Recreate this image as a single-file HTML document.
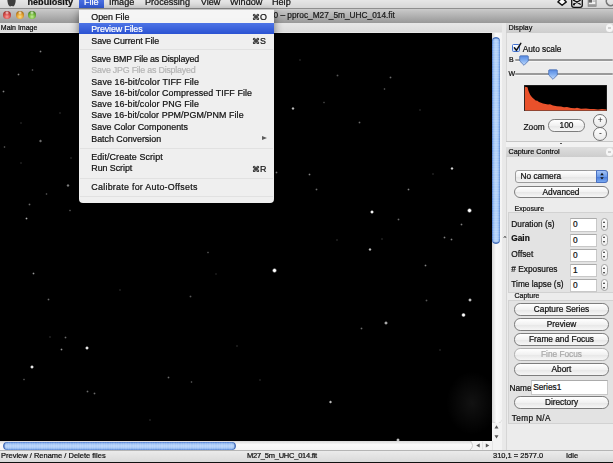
<!DOCTYPE html>
<html>
<head>
<meta charset="utf-8">
<style>
html,body{margin:0;padding:0;}
body{width:613px;height:463px;overflow:hidden;position:relative;background:#e8e8e8;font-family:"Liberation Sans",sans-serif;color:#111;}
.abs{position:absolute;}
.t{position:absolute;white-space:nowrap;line-height:1;}
.t,.btn,.inp,.nc{will-change:opacity;-webkit-text-stroke:0.22px currentColor;}
/* menubar */
#menubar{left:0;top:0;width:613px;height:9px;background:linear-gradient(#e6e6e6,#d6d6d6);overflow:hidden;border-bottom:1px solid #8e8e8e;box-sizing:border-box;}
#menubar .t{font-size:9.1px;top:-1.8px;color:#111;}
#filehl{left:79px;top:0;width:25px;height:9px;background:linear-gradient(#4a6fe0,#2f55d0);}
/* title bar */
#titlebar{left:0;top:9px;width:613px;height:14px;background:linear-gradient(#cbcbcb,#c0c0c0 20%,#989898);box-sizing:border-box;}
.tl{position:absolute;width:8.2px;height:8.2px;border-radius:50%;top:11.1px;}
#hdr{left:0;top:23px;width:502px;height:10px;background:linear-gradient(#e7e7e7,#dcdcdc 85%,#ececec);}
#img{left:0;top:33px;width:492px;height:408px;background:#000;overflow:hidden;}
.s{position:absolute;border-radius:50%;}
/* scrollbars */
#vs{left:492px;top:33px;width:10px;height:408px;background:linear-gradient(90deg,#d8d8d8,#fafafa 40%,#f4f4f4);}
#vthumb{left:492.3px;top:36.8px;width:8px;height:206.8px;border-radius:4px;background:repeating-linear-gradient(0deg,rgba(255,255,255,0.10) 0,rgba(255,255,255,0.10) 1.2px,rgba(255,255,255,0) 1.2px,rgba(255,255,255,0) 2.4px),linear-gradient(90deg,#5886d8,#8ab4ee 14%,#b4d2f9 38%,#b4d2f9 64%,#8ab4ee 88%,#6a98e0);box-shadow:inset 0 1.5px 1px #3d67b4,inset 0 -1.5px 1px #3d67b4;}
#hs{left:0;top:441px;width:502px;height:9px;background:linear-gradient(#d8d8d8,#fafafa 40%,#f4f4f4);}
#hthumb{left:2.5px;top:441.8px;width:233px;height:7.8px;border-radius:4px;background:repeating-linear-gradient(90deg,rgba(255,255,255,0.10) 0,rgba(255,255,255,0.10) 1.2px,rgba(255,255,255,0) 1.2px,rgba(255,255,255,0) 2.4px),linear-gradient(#5886d8,#8ab4ee 14%,#b4d2f9 38%,#b4d2f9 64%,#8ab4ee 88%,#6a98e0);box-shadow:inset 1.5px 0 1px #3d67b4,inset -1.5px 0 1px #3d67b4;}
#status{left:0;top:449.5px;width:613px;height:13.5px;background:linear-gradient(#ebebeb,#dadada);border-top:1px solid #b5b5b5;border-bottom:1.5px solid #111;box-sizing:border-box;}
#status .t{font-size:7.5px;top:1.3px;color:#111;}
/* right panel */
#rp{left:502px;top:23px;width:111px;height:427px;background:#e9e9e9;}
#rpi{left:506px;top:23px;width:107px;height:427px;background:#ececec;border-left:1px solid #d6d6d6;box-sizing:border-box;}
.ph{position:absolute;left:506px;width:107px;height:10px;background:linear-gradient(#dedede,#cdcdcd);}
.ph .t{left:2.5px;top:1.4px;font-size:7.25px;color:#111;}
.lbl{font-size:8.3px;color:#111;}
.sm{font-size:7px;color:#111;}
.btn{position:absolute;height:12.4px;border-radius:6.2px;background:linear-gradient(#ffffff,#f1f1f1 50%,#e6e6e6 51%,#f6f6f6);border:1px solid #7d7d7d;box-sizing:border-box;text-align:center;font-size:8.3px;line-height:10px;color:#111;}
.inp{position:absolute;background:#fff;border:1px solid #c8c8c8;border-top-color:#ababab;box-sizing:border-box;font-size:8.3px;line-height:11px;padding-left:2px;color:#111;}
.step{position:absolute;width:7px;height:12.6px;border-radius:3.5px;border:1px solid #a6a6a6;background:linear-gradient(#fff,#efefef);box-sizing:border-box;}
.step:before{content:"";position:absolute;left:1px;top:1.8px;border-left:1.5px solid transparent;border-right:1.5px solid transparent;border-bottom:2.5px solid #222;}
.step:after{content:"";position:absolute;left:1px;bottom:1.8px;border-left:1.5px solid transparent;border-right:1.5px solid transparent;border-top:2.5px solid #222;}
.grp{position:absolute;background:#e3e3e3;border:1px solid #d2d2d2;border-right:none;box-sizing:border-box;}
/* menu */
#menu{left:79px;top:9px;width:195px;height:193.6px;background:rgba(247,247,247,0.97);border-radius:0 0 4px 4px;box-shadow:0 3px 8px rgba(0,0,0,0.5);}
#menu .t{font-size:8.9px;left:12.3px;color:#111;}
#menu .k{left:173.1px;}
#menu .sep{position:absolute;left:1px;right:1px;height:1px;background:#e1e1e1;}
#mhl{left:0;top:13.6px;width:195px;height:11.4px;background:linear-gradient(#4d74e6,#2a52d2);}
</style>
</head>
<body>
<!-- menubar -->
<div id="menubar" class="abs">
  <div id="filehl" class="abs"></div>
  <svg class="abs" style="left:550px;top:0;" width="63" height="9" viewBox="0 0 63 9">
    <path d="M12.1 -2.2 L16.3 1.9 L12.1 5.3 L7.9 1.9 Z" fill="#fff" stroke="#111" stroke-width="1.4" stroke-linejoin="round"/>
    <rect x="21.7" y="-4" width="10.6" height="11.3" rx="2.2" fill="#dcdcdc" stroke="#111" stroke-width="1.3"/>
    <path d="M23.5 0.2 L30.3 4.2 M23.5 4.2 L30.3 0.2" stroke="#111" stroke-width="1.3" stroke-linecap="round"/>
    <circle cx="24" cy="4.6" r="1" fill="#111"/><circle cx="24" cy="-0.2" r="1" fill="#111"/>
    <rect x="38.2" y="-3" width="7.8" height="9.2" fill="#f2f2f2" stroke="#777" stroke-width="0.9"/>
    <rect x="38.6" y="-1" width="3.4" height="3.6" fill="#666"/>
    <rect x="38.6" y="4.3" width="7" height="1.5" fill="#8a8a8a"/>
    <rect x="42.5" y="0.6" width="3.2" height="0.9" fill="#999"/>
    <path d="M57.3 -1.5 A4.4 4.4 0 0 0 64 4.2" fill="none" stroke="#777" stroke-width="1.6"/>
  </svg>
  <svg class="abs" style="left:5px;top:0;" width="14" height="9" viewBox="0 0 14 9"><path d="M2.4 -1 C2.2 2.5 3.6 6.4 5.2 6.4 C5.9 6.4 6.1 6 6.6 6 C7.1 6 7.3 6.4 8 6.4 C9.6 6.4 11 2.5 10.6 -1 Z" fill="#3e3e3e"/></svg>
  <div class="t" style="left:27.5px;font-weight:bold;">nebulosity</div>
  <div class="t" style="left:84px;color:#fff;">File</div>
  <div class="t" style="left:109px;">Image</div>
  <div class="t" style="left:145px;">Processing</div>
  <div class="t" style="left:200.8px;">View</div>
  <div class="t" style="left:230px;">Window</div>
  <div class="t" style="left:272px;">Help</div>
</div>
<!-- titlebar -->
<div id="titlebar" class="abs"></div>
<div class="tl" style="left:2.8px;background:radial-gradient(circle at 50% 22%,rgba(255,235,235,0.9) 0,rgba(255,235,235,0) 28%),radial-gradient(circle at 50% 72%,#f5a3a0 0,#de5552 38%,#a83330 72%,#7c2321 100%);"></div>
<div class="tl" style="left:15.5px;background:radial-gradient(circle at 50% 22%,rgba(255,250,230,0.9) 0,rgba(255,250,230,0) 28%),radial-gradient(circle at 50% 72%,#fbe08a 0,#e9a93a 38%,#b0741c 72%,#7e5212 100%);"></div>
<div class="tl" style="left:28.1px;background:radial-gradient(circle at 50% 22%,rgba(240,255,230,0.9) 0,rgba(240,255,230,0) 28%),radial-gradient(circle at 50% 72%,#c6ec98 0,#7cc044 38%,#4c8626 72%,#345f18 100%);"></div>
<div class="t" style="left:273.5px;top:11.2px;font-size:8.3px;color:#1a1a1a;">0 – pproc_M27_5m_UHC_014.fit</div>
<!-- header row -->
<div id="hdr" class="abs"></div>
<div class="t" style="left:0.8px;top:24.3px;font-size:7px;">Main Image</div>
<!-- image -->
<div id="img" class="abs"><i class="s" style="left:466.5px;top:175.0px;width:5.2px;height:5.2px;background:radial-gradient(circle,rgba(255,255,255,1.00) 30%,rgba(255,255,255,0) 72%)"></i><i class="s" style="left:369.5px;top:177.3px;width:4.1px;height:4.1px;background:radial-gradient(circle,rgba(255,255,255,0.95) 30%,rgba(255,255,255,0) 72%)"></i><i class="s" style="left:450.0px;top:133.5px;width:3.9px;height:3.9px;background:radial-gradient(circle,rgba(255,255,255,0.90) 15%,rgba(255,255,255,0) 72%)"></i><i class="s" style="left:291.3px;top:73.7px;width:3.6px;height:3.6px;background:radial-gradient(circle,rgba(255,255,255,0.80) 15%,rgba(255,255,255,0) 72%)"></i><i class="s" style="left:307.5px;top:139.8px;width:3.1px;height:3.1px;background:radial-gradient(circle,rgba(255,255,255,0.51) 0%,rgba(255,255,255,0) 72%)"></i><i class="s" style="left:275.4px;top:138.4px;width:3.0px;height:3.0px;background:radial-gradient(circle,rgba(255,255,255,0.51) 0%,rgba(255,255,255,0) 72%)"></i><i class="s" style="left:407.4px;top:155.2px;width:3.0px;height:3.0px;background:radial-gradient(circle,rgba(255,255,255,0.51) 0%,rgba(255,255,255,0) 72%)"></i><i class="s" style="left:315.3px;top:155.3px;width:2.8px;height:2.8px;background:radial-gradient(circle,rgba(255,255,255,0.42) 0%,rgba(255,255,255,0) 72%)"></i><i class="s" style="left:383.4px;top:54.6px;width:2.8px;height:2.8px;background:radial-gradient(circle,rgba(255,255,255,0.42) 0%,rgba(255,255,255,0) 72%)"></i><i class="s" style="left:389.3px;top:43.2px;width:2.8px;height:2.8px;background:radial-gradient(circle,rgba(255,255,255,0.42) 0%,rgba(255,255,255,0) 72%)"></i><i class="s" style="left:336.3px;top:41.1px;width:2.7px;height:2.7px;background:radial-gradient(circle,rgba(255,255,255,0.34) 0%,rgba(255,255,255,0) 72%)"></i><i class="s" style="left:322.7px;top:68.3px;width:2.7px;height:2.7px;background:radial-gradient(circle,rgba(255,255,255,0.34) 0%,rgba(255,255,255,0) 72%)"></i><i class="s" style="left:358.4px;top:87.5px;width:3.0px;height:3.0px;background:radial-gradient(circle,rgba(255,255,255,0.42) 0%,rgba(255,255,255,0) 72%)"></i><i class="s" style="left:460.4px;top:190.4px;width:3.0px;height:3.0px;background:radial-gradient(circle,rgba(255,255,255,0.51) 0%,rgba(255,255,255,0) 72%)"></i><i class="s" style="left:397.4px;top:185.3px;width:2.8px;height:2.8px;background:radial-gradient(circle,rgba(255,255,255,0.42) 0%,rgba(255,255,255,0) 72%)"></i><i class="s" style="left:431.5px;top:139.7px;width:2.7px;height:2.7px;background:radial-gradient(circle,rgba(255,255,255,0.42) 0%,rgba(255,255,255,0) 72%)"></i><i class="s" style="left:271.6px;top:235.3px;width:5.2px;height:5.2px;background:radial-gradient(circle,rgba(255,255,255,1.00) 30%,rgba(255,255,255,0) 72%)"></i><i class="s" style="left:461.4px;top:279.6px;width:4.9px;height:4.9px;background:radial-gradient(circle,rgba(255,255,255,1.00) 30%,rgba(255,255,255,0) 72%)"></i><i class="s" style="left:468.4px;top:264.8px;width:3.9px;height:3.9px;background:radial-gradient(circle,rgba(255,255,255,0.90) 15%,rgba(255,255,255,0) 72%)"></i><i class="s" style="left:368.1px;top:214.7px;width:3.6px;height:3.6px;background:radial-gradient(circle,rgba(255,255,255,0.80) 15%,rgba(255,255,255,0) 72%)"></i><i class="s" style="left:384.4px;top:288.2px;width:3.6px;height:3.6px;background:radial-gradient(circle,rgba(255,255,255,0.80) 15%,rgba(255,255,255,0) 72%)"></i><i class="s" style="left:328.6px;top:367.2px;width:3.6px;height:3.6px;background:radial-gradient(circle,rgba(255,255,255,0.80) 15%,rgba(255,255,255,0) 72%)"></i><i class="s" style="left:424.1px;top:231.4px;width:3.0px;height:3.0px;background:radial-gradient(circle,rgba(255,255,255,0.51) 0%,rgba(255,255,255,0) 72%)"></i><i class="s" style="left:443.4px;top:203.4px;width:3.0px;height:3.0px;background:radial-gradient(circle,rgba(255,255,255,0.51) 0%,rgba(255,255,255,0) 72%)"></i><i class="s" style="left:450.4px;top:205.4px;width:3.0px;height:3.0px;background:radial-gradient(circle,rgba(255,255,255,0.51) 0%,rgba(255,255,255,0) 72%)"></i><i class="s" style="left:395.9px;top:405.1px;width:3.9px;height:3.9px;background:radial-gradient(circle,rgba(255,255,255,0.90) 15%,rgba(255,255,255,0) 72%)"></i><i class="s" style="left:360.1px;top:294.1px;width:2.8px;height:2.8px;background:radial-gradient(circle,rgba(255,255,255,0.42) 0%,rgba(255,255,255,0) 72%)"></i><i class="s" style="left:425.2px;top:266.2px;width:2.8px;height:2.8px;background:radial-gradient(circle,rgba(255,255,255,0.34) 0%,rgba(255,255,255,0) 72%)"></i><i class="s" style="left:335.7px;top:205.7px;width:2.7px;height:2.7px;background:radial-gradient(circle,rgba(255,255,255,0.42) 0%,rgba(255,255,255,0) 72%)"></i><i class="s" style="left:380.7px;top:204.7px;width:2.7px;height:2.7px;background:radial-gradient(circle,rgba(255,255,255,0.42) 0%,rgba(255,255,255,0) 72%)"></i><i class="s" style="left:85.3px;top:312.5px;width:4.1px;height:4.1px;background:radial-gradient(circle,rgba(255,255,255,0.90) 30%,rgba(255,255,255,0) 72%)"></i><i class="s" style="left:29.5px;top:332.4px;width:4.1px;height:4.1px;background:radial-gradient(circle,rgba(255,255,255,0.90) 30%,rgba(255,255,255,0) 72%)"></i><i class="s" style="left:60.1px;top:315.2px;width:3.3px;height:3.3px;background:radial-gradient(circle,rgba(255,255,255,0.59) 0%,rgba(255,255,255,0) 72%)"></i><i class="s" style="left:31.8px;top:238.5px;width:3.3px;height:3.3px;background:radial-gradient(circle,rgba(255,255,255,0.59) 0%,rgba(255,255,255,0) 72%)"></i><i class="s" style="left:47.3px;top:265.1px;width:3.0px;height:3.0px;background:radial-gradient(circle,rgba(255,255,255,0.42) 0%,rgba(255,255,255,0) 72%)"></i><i class="s" style="left:63.5px;top:303.4px;width:3.0px;height:3.0px;background:radial-gradient(circle,rgba(255,255,255,0.42) 0%,rgba(255,255,255,0) 72%)"></i><i class="s" style="left:48.6px;top:302.6px;width:2.8px;height:2.8px;background:radial-gradient(circle,rgba(255,255,255,0.42) 0%,rgba(255,255,255,0) 72%)"></i><i class="s" style="left:167.2px;top:342.9px;width:3.0px;height:3.0px;background:radial-gradient(circle,rgba(255,255,255,0.42) 0%,rgba(255,255,255,0) 72%)"></i><i class="s" style="left:190.0px;top:347.6px;width:2.8px;height:2.8px;background:radial-gradient(circle,rgba(255,255,255,0.42) 0%,rgba(255,255,255,0) 72%)"></i><i class="s" style="left:86.0px;top:357.1px;width:3.0px;height:3.0px;background:radial-gradient(circle,rgba(255,255,255,0.42) 0%,rgba(255,255,255,0) 72%)"></i><i class="s" style="left:92.9px;top:359.2px;width:2.8px;height:2.8px;background:radial-gradient(circle,rgba(255,255,255,0.42) 0%,rgba(255,255,255,0) 72%)"></i><i class="s" style="left:235.6px;top:311.6px;width:2.8px;height:2.8px;background:radial-gradient(circle,rgba(255,255,255,0.42) 0%,rgba(255,255,255,0) 72%)"></i><i class="s" style="left:206.7px;top:218.0px;width:2.7px;height:2.7px;background:radial-gradient(circle,rgba(255,255,255,0.42) 0%,rgba(255,255,255,0) 72%)"></i><i class="s" style="left:214.7px;top:239.7px;width:2.7px;height:2.7px;background:radial-gradient(circle,rgba(255,255,255,0.34) 0%,rgba(255,255,255,0) 72%)"></i><i class="s" style="left:22.7px;top:345.3px;width:2.7px;height:2.7px;background:radial-gradient(circle,rgba(255,255,255,0.42) 0%,rgba(255,255,255,0) 72%)"></i><i class="s" style="left:189.2px;top:262.2px;width:2.7px;height:2.7px;background:radial-gradient(circle,rgba(255,255,255,0.34) 0%,rgba(255,255,255,0) 72%)"></i><i class="s" style="left:38.5px;top:17.3px;width:3.0px;height:3.0px;background:radial-gradient(circle,rgba(255,255,255,0.51) 0%,rgba(255,255,255,0) 72%)"></i><i class="s" style="left:17.4px;top:40.0px;width:3.0px;height:3.0px;background:radial-gradient(circle,rgba(255,255,255,0.51) 0%,rgba(255,255,255,0) 72%)"></i><i class="s" style="left:2.1px;top:56.5px;width:3.0px;height:3.0px;background:radial-gradient(circle,rgba(255,255,255,0.51) 0%,rgba(255,255,255,0) 72%)"></i><i class="s" style="left:58.6px;top:78.6px;width:2.8px;height:2.8px;background:radial-gradient(circle,rgba(255,255,255,0.42) 0%,rgba(255,255,255,0) 72%)"></i><i class="s" style="left:39.1px;top:106.3px;width:3.3px;height:3.3px;background:radial-gradient(circle,rgba(255,255,255,0.59) 0%,rgba(255,255,255,0) 72%)"></i><i class="s" style="left:3.1px;top:112.6px;width:2.8px;height:2.8px;background:radial-gradient(circle,rgba(255,255,255,0.42) 0%,rgba(255,255,255,0) 72%)"></i><i class="s" style="left:66.3px;top:150.9px;width:3.3px;height:3.3px;background:radial-gradient(circle,rgba(255,255,255,0.68) 0%,rgba(255,255,255,0) 72%)"></i><i class="s" style="left:24.6px;top:183.6px;width:3.3px;height:3.3px;background:radial-gradient(circle,rgba(255,255,255,0.68) 0%,rgba(255,255,255,0) 72%)"></i><i class="s" style="left:28.1px;top:170.3px;width:2.8px;height:2.8px;background:radial-gradient(circle,rgba(255,255,255,0.42) 0%,rgba(255,255,255,0) 72%)"></i><i class="s" style="left:68.6px;top:176.2px;width:2.8px;height:2.8px;background:radial-gradient(circle,rgba(255,255,255,0.42) 0%,rgba(255,255,255,0) 72%)"></i><i class="s" style="left:69.7px;top:123.7px;width:2.7px;height:2.7px;background:radial-gradient(circle,rgba(255,255,255,0.42) 0%,rgba(255,255,255,0) 72%)"></i><i class="s" style="left:31.1px;top:35.5px;width:2.6px;height:2.6px;background:radial-gradient(circle,rgba(255,255,255,0.4) 0%,rgba(255,255,255,0) 72%)"></i><i class="s" style="left:19.5px;top:88.7px;width:2.6px;height:2.6px;background:radial-gradient(circle,rgba(255,255,255,0.4) 0%,rgba(255,255,255,0) 72%)"></i><i class="s" style="left:19.5px;top:128.5px;width:2.6px;height:2.6px;background:radial-gradient(circle,rgba(255,255,255,0.4) 0%,rgba(255,255,255,0) 72%)"></i><i class="s" style="left:45.4px;top:159.7px;width:2.6px;height:2.6px;background:radial-gradient(circle,rgba(255,255,255,0.4) 0%,rgba(255,255,255,0) 72%)"></i><i class="s" style="left:118.7px;top:255.7px;width:2.6px;height:2.6px;background:radial-gradient(circle,rgba(255,255,255,0.4) 0%,rgba(255,255,255,0) 72%)"></i><i class="s" style="left:298.7px;top:25.7px;width:2.6px;height:2.6px;background:radial-gradient(circle,rgba(255,255,255,0.4) 0%,rgba(255,255,255,0) 72%)"></i><i class="s" style="left:418.7px;top:75.7px;width:2.6px;height:2.6px;background:radial-gradient(circle,rgba(255,255,255,0.4) 0%,rgba(255,255,255,0) 72%)"></i><i class="s" style="left:148.7px;top:385.7px;width:2.6px;height:2.6px;background:radial-gradient(circle,rgba(255,255,255,0.4) 0%,rgba(255,255,255,0) 72%)"></i><i class="s" style="left:258.7px;top:345.7px;width:2.6px;height:2.6px;background:radial-gradient(circle,rgba(255,255,255,0.4) 0%,rgba(255,255,255,0) 72%)"></i><i class="s" style="left:438.7px;top:315.7px;width:2.6px;height:2.6px;background:radial-gradient(circle,rgba(255,255,255,0.4) 0%,rgba(255,255,255,0) 72%)"></i><div class="abs" style="left:446px;top:338px;width:52px;height:64px;background:radial-gradient(ellipse at center,rgba(255,255,255,0.07),rgba(255,255,255,0) 70%);"></div></div>
<!-- scrollbars -->
<div id="vs" class="abs"></div>
<div id="vthumb" class="abs"></div>
<div id="hs" class="abs"></div>
<div id="hthumb" class="abs"></div>
<!-- right panel -->
<div id="rp" class="abs"></div>
<div id="rpi" class="abs"></div>
<div class="ph" style="top:23px;"><div class="t">Display</div></div>
<div class="ph" style="top:147px;"><div class="t">Capture Control</div></div>
<!-- display panel -->
<div class="abs" style="left:512px;top:44px;width:8px;height:8px;border:1.3px solid #3f6fcf;border-radius:1.5px;background:linear-gradient(#ffffff,#c6dbfa);box-sizing:border-box;"></div>
<svg class="abs" style="left:511.5px;top:41.5px;" width="11" height="11" viewBox="0 0 11 11"><path d="M2.4 5.8 L4.4 8.4 L8.8 1.4" fill="none" stroke="#111" stroke-width="1.5" stroke-linecap="round" stroke-linejoin="round"/></svg>
<div class="t lbl" style="left:522.7px;top:45px;">Auto scale</div>
<div class="t sm" style="left:509px;top:56px;">B</div>
<div class="t sm" style="left:508.5px;top:70px;">W</div>
<div class="abs" style="left:515px;top:58.5px;width:98px;height:2px;background:#9a9a9a;border-radius:1px;box-shadow:0 0.5px 0 #fff;"></div>
<div class="abs" style="left:515px;top:72.5px;width:98px;height:2px;background:#9a9a9a;border-radius:1px;box-shadow:0 0.5px 0 #fff;"></div>
<svg class="abs" style="left:518.5px;top:55px;" width="10" height="11" viewBox="0 0 10 11"><defs><linearGradient id="tg" x1="0" y1="0" x2="0" y2="1"><stop offset="0" stop-color="#5688e2"/><stop offset="0.45" stop-color="#7eacf0"/><stop offset="1" stop-color="#c4dbfb"/></linearGradient></defs><path d="M1.5 0.8 H8.5 Q9.3 0.8 9.3 1.6 V6 L5 10.3 L0.7 6 V1.6 Q0.7 0.8 1.5 0.8 Z" fill="url(#tg)" stroke="#4a6fb0" stroke-width="0.8"/></svg>
<svg class="abs" style="left:547.7px;top:69px;" width="10" height="11" viewBox="0 0 10 11"><defs><linearGradient id="tg" x1="0" y1="0" x2="0" y2="1"><stop offset="0" stop-color="#5688e2"/><stop offset="0.45" stop-color="#7eacf0"/><stop offset="1" stop-color="#c4dbfb"/></linearGradient></defs><path d="M1.5 0.8 H8.5 Q9.3 0.8 9.3 1.6 V6 L5 10.3 L0.7 6 V1.6 Q0.7 0.8 1.5 0.8 Z" fill="url(#tg)" stroke="#4a6fb0" stroke-width="0.8"/></svg>
<svg class="abs" style="left:523.5px;top:84.5px;" width="83" height="26" viewBox="0 0 83 26"><rect x="0" y="0" width="83" height="26" fill="#000"/><path d="M0.8 26 L0.8 3 L1.2 1.8 L3.5 2.2 L4.5 6 L6.3 10 L8 12.3 L10 14 L12 15.8 L13 15.4 L15 17 L19 18.4 L24 19.5 L26 19.2 L29 20.6 L33 21.2 L37 21.4 L40 22.3 L43 22 L47 23 L51 23.3 L53 22.8 L57 23.7 L62 23.6 L66 24.1 L70 24 L74 24.4 L78 24.1 L83 24.4 L83 26 Z" fill="#e9512b"/><rect x="0.25" y="0.25" width="82.5" height="25.5" fill="none" stroke="#3a3a3a" stroke-width="0.5"/></svg>
<div class="t lbl" style="left:523.5px;top:122.9px;">Zoom</div>
<div class="btn" style="left:548px;top:119px;width:37px;height:13px;line-height:11px;">100</div>
<div class="abs" style="left:593.3px;top:113.5px;width:14px;height:14px;border-radius:50%;border:1px solid #6f6f6f;background:linear-gradient(#fff,#e9e9e9);box-sizing:border-box;text-align:center;font-size:8.5px;line-height:11.5px;color:#222;">+</div>
<div class="abs" style="left:593.3px;top:126.7px;width:14px;height:14px;border-radius:50%;border:1px solid #6f6f6f;background:linear-gradient(#fff,#e9e9e9);box-sizing:border-box;text-align:center;font-size:8.5px;line-height:11px;color:#222;">-</div>
<div class="abs" style="left:506px;top:141px;width:107px;height:6px;background:#f2f2f2;border-top:1px solid #c6c6c6;box-sizing:border-box;"></div>
<div class="abs" style="left:559.5px;top:142.7px;width:2px;height:1.5px;background:#555;"></div>
<!-- capture control -->
<div class="abs nc" style="left:514.5px;top:170.4px;width:93.5px;height:12.4px;border-radius:3px;border:1px solid #9c9c9c;background:linear-gradient(#fff,#f0f0f0 50%,#e4e4e4 51%,#f4f4f4);box-sizing:border-box;font-size:8.3px;line-height:10px;padding-left:5px;">No camera</div>
<div class="abs" style="left:596px;top:170.4px;width:12px;height:12.4px;border-radius:0 3px 3px 0;border:1px solid #4a70c0;background:linear-gradient(#a4c4f6,#6a9aea 50%,#4678d8 51%,#78a8f0);box-sizing:border-box;"></div>
<svg class="abs" style="left:596px;top:170.4px;" width="12" height="12.4" viewBox="0 0 12 12.4"><path d="M4.2 5.2 L6 2.8 L7.8 5.2 Z M4.2 7.2 L6 9.6 L7.8 7.2 Z" fill="#151515"/></svg>
<div class="btn" style="left:513.5px;top:186px;width:95px;">Advanced</div>
<div class="t sm" style="left:514.5px;top:204.5px;">Exposure</div>
<div class="grp" style="left:507.7px;top:212.3px;width:105.3px;height:80.4px;"></div>
<div class="t lbl" style="left:511.3px;top:219.6px;">Duration (s)</div>
<div class="inp" style="left:570px;top:218.4px;width:26.5px;height:13.4px;line-height:11.6px;">0</div>
<div class="step" style="left:601px;top:218.4px;"></div>
<div class="t lbl" style="left:511.3px;top:233.8px;font-weight:bold;">Gain</div>
<div class="inp" style="left:570px;top:233.5px;width:26.5px;height:13.4px;line-height:11.6px;">0</div>
<div class="step" style="left:601px;top:233.5px;"></div>
<div class="t lbl" style="left:511.3px;top:249.8px;">Offset</div>
<div class="inp" style="left:570px;top:248.6px;width:26.5px;height:13.4px;line-height:11.6px;">0</div>
<div class="step" style="left:601px;top:248.6px;"></div>
<div class="t lbl" style="left:511.3px;top:265.0px;"># Exposures</div>
<div class="inp" style="left:570px;top:263.8px;width:26.5px;height:13.4px;line-height:11.6px;">1</div>
<div class="step" style="left:601px;top:263.8px;"></div>
<div class="t lbl" style="left:511.3px;top:280.1px;">Time lapse (s)</div>
<div class="inp" style="left:570px;top:278.9px;width:26.5px;height:13.4px;line-height:11.6px;">0</div>
<div class="step" style="left:601px;top:278.9px;"></div>
<div class="t sm" style="left:514.5px;top:292.3px;">Capture</div>
<div class="grp" style="left:507.7px;top:300px;width:105.3px;height:124px;"></div>
<div class="btn" style="left:514px;top:303.3px;width:95px;">Capture Series</div>
<div class="btn" style="left:514px;top:318.3px;width:95px;">Preview</div>
<div class="btn" style="left:514px;top:333.3px;width:95px;">Frame and Focus</div>
<div class="btn" style="left:514px;top:348.3px;width:95px;color:#a8a8a8;border-color:#b0b0b0;">Fine Focus</div>
<div class="btn" style="left:514px;top:363.3px;width:95px;">Abort</div>
<div class="btn" style="left:514px;top:396.3px;width:95px;">Directory</div>
<div class="t lbl" style="left:509.5px;top:383.8px;">Name</div>
<div class="inp" style="left:530.8px;top:380.4px;width:76.8px;height:14.4px;line-height:12.4px;padding-left:1.4px;">Series1</div>
<div class="t lbl" style="left:511.8px;top:413.5px;letter-spacing:0.33px;">Temp N/A</div>
<!-- scroll arrows -->
<div class="abs" style="left:492px;top:405px;width:10px;height:18px;border-radius:0 0 5px 5px;background:linear-gradient(90deg,#dadada,#fbfbfb 45%,#f3f3f3);box-shadow:0 1px 0 #cfcfcf;"></div>
<svg class="abs" style="left:492px;top:422px;" width="10" height="19" viewBox="0 0 10 19"><rect x="0" y="1" width="10" height="18" fill="#f3f3f3"/><path d="M2.5 6.6 L4.5 3.3 L6.5 6.6 Z M2.5 13.2 L4.5 16.5 L6.5 13.2 Z" fill="#555"/></svg>
<svg class="abs" style="left:466px;top:441px;" width="36" height="9" viewBox="0 0 36 9"><rect x="6" y="0" width="30" height="9" fill="#f3f3f3"/><path d="M4 0 Q9 4.5 4 9" fill="none" stroke="#c4c4c4" stroke-width="0.9"/><path d="M13.7 2.6 L10.2 4.6 L13.7 6.6 Z M19.8 2.6 L23.3 4.6 L19.8 6.6 Z" fill="#555"/><path d="M16.6 0.5 V8.5" stroke="#d0d0d0" stroke-width="0.6"/><path d="M26.5 0 V9" stroke="#dcdcdc" stroke-width="0.6"/></svg>
<div class="t" style="left:503.5px;top:235px;font-size:6px;color:#444;">^</div>
<div class="abs" style="left:605.8px;top:24.3px;width:7.4px;height:7.4px;border-radius:50%;background:#f6f6f6;"></div><div class="abs" style="left:608.4px;top:26.9px;width:2.2px;height:2.2px;background:#cfcfcf;"></div>
<div class="abs" style="left:605.8px;top:148.3px;width:7.4px;height:7.4px;border-radius:50%;background:#f6f6f6;"></div><div class="abs" style="left:608.4px;top:150.9px;width:2.2px;height:2.2px;background:#cfcfcf;"></div>
<!-- status -->
<div id="status" class="abs">
  <div class="t" style="left:1px;">Preview / Rename / Delete files</div>
  <div class="t" style="left:247px;letter-spacing:-0.24px;">M27_5m_UHC_014.fit</div>
  <div class="t" style="left:493px;">310,1 = 2577.0</div>
  <div class="t" style="left:566px;">Idle</div>
</div>
<!-- menu -->
<div id="menu" class="abs">
  <div class="abs" style="left:0;top:0;width:195px;height:1px;background:#c6c6c6;"></div>
  <div id="mhl" class="abs"></div>
  <div class="t" style="top:3.7px;letter-spacing:-0.056px;">Open File</div>
  <div class="t k" style="top:3.8px;"><span style="font-size:7.9px;">⌘</span>O</div>
  <div class="t" style="top:15.6px;color:#fff;letter-spacing:-0.123px;">Preview Files</div>
  <div class="t" style="top:27.5px;letter-spacing:-0.076px;">Save Current File</div>
  <div class="t k" style="top:27.5px;"><span style="font-size:7.9px;">⌘</span>S</div>
  <div class="t" style="top:45.5px;letter-spacing:-0.158px;">Save BMP File as Displayed</div>
  <div class="t" style="top:56.9px;color:#b4b4b4;letter-spacing:-0.227px;">Save JPG File as Displayed</div>
  <div class="t" style="top:68.5px;letter-spacing:0.122px;">Save 16-bit/color TIFF File</div>
  <div class="t" style="top:79.7px;letter-spacing:0.095px;">Save 16-bit/color Compressed TIFF File</div>
  <div class="t" style="top:91.1px;letter-spacing:0.100px;">Save 16-bit/color PNG File</div>
  <div class="t" style="top:102.2px;letter-spacing:0.071px;">Save 16-bit/color PPM/PGM/PNM File</div>
  <div class="t" style="top:113.9px;letter-spacing:0.000px;">Save Color Components</div>
  <div class="t" style="top:125.8px;letter-spacing:-0.019px;">Batch Conversion</div>
  <div class="abs" style="right:7.3px;top:126.5px;width:0;height:0;border-top:2.9px solid transparent;border-bottom:2.9px solid transparent;border-left:5px solid #5c5c5c;"></div>
  <div class="t" style="top:144.4px;letter-spacing:0.106px;">Edit/Create Script</div>
  <div class="t" style="top:155.2px;letter-spacing:-0.050px;">Run Script</div>
  <div class="t k" style="top:155.6px;"><span style="font-size:7.9px;">⌘</span>R</div>
  <div class="t" style="top:174.0px;letter-spacing:0.262px;">Calibrate for Auto-Offsets</div>
  <div class="sep" style="top:39.5px;"></div>
  <div class="sep" style="top:138.5px;"></div>
  <div class="sep" style="top:168.5px;"></div>
  <div class="sep" style="top:186.5px;"></div>
</div>
</body>
</html>
